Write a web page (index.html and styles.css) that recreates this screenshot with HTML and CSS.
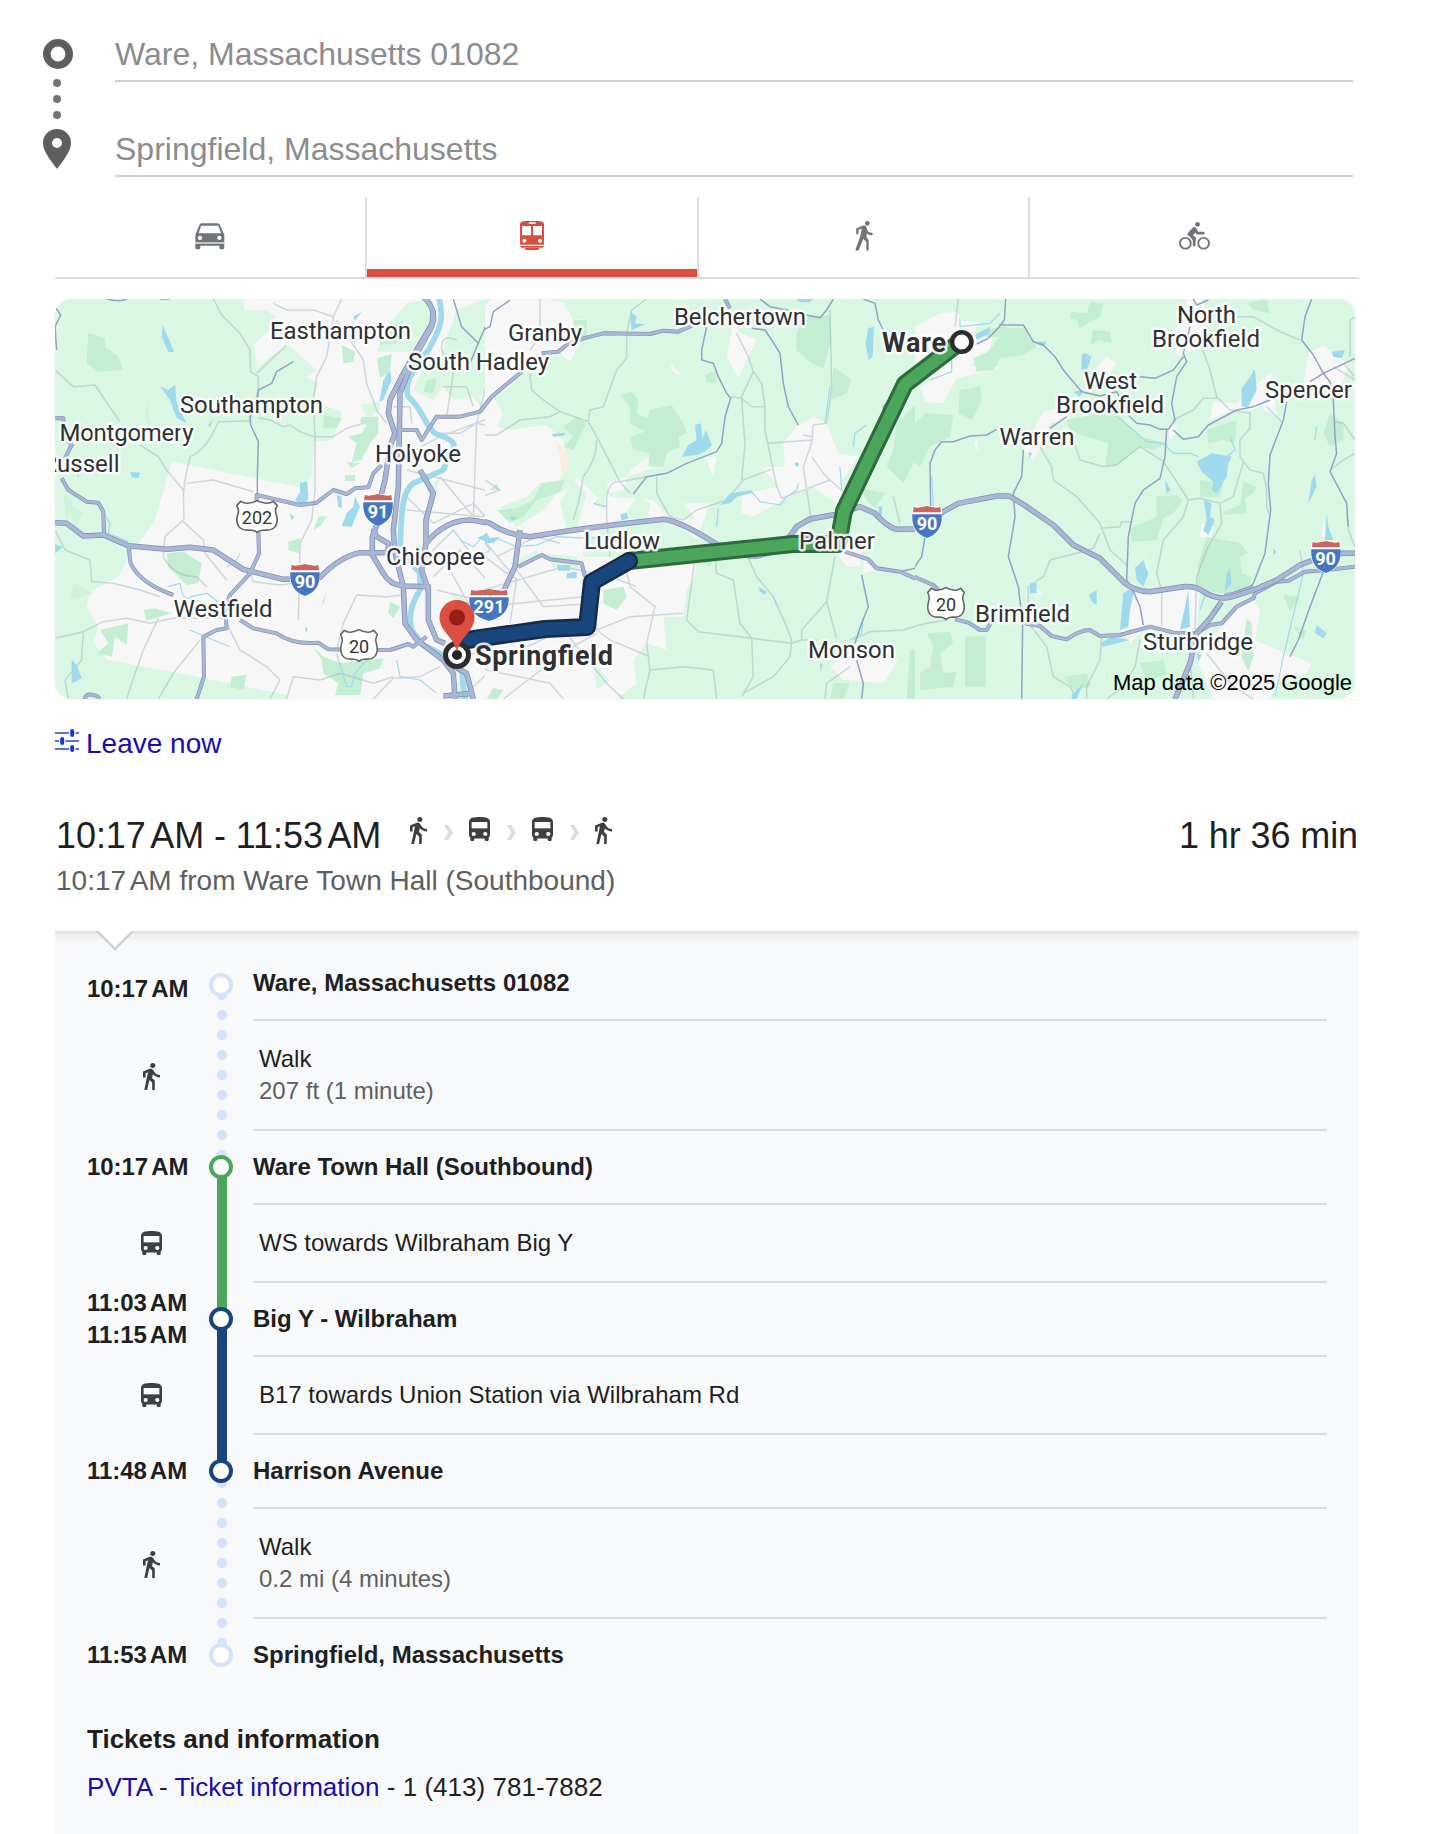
FILE: index.html
```html
<!DOCTYPE html>
<html lang="en">
<head>
<meta charset="utf-8">
<title>Directions</title>
<link rel="stylesheet" href="styles.css">
</head>
<body>
<svg class="defs" aria-hidden="true">
  <symbol id="walk" viewBox="6 1.5 13 21.5" preserveAspectRatio="none"><path d="M13.5 5.5c1.1 0 2-.9 2-2s-.9-2-2-2-2 .9-2 2 .9 2 2 2zM9.8 8.9L7 23h2.1l1.8-8 2.1 2v6h2v-7.500l-2.100-2 .6-3C14.800 12 16.800 13 19 13v-2c-1.900 0-3.500-1-4.300-2.400l-1-1.600c-.4-.6-1-1-1.700-1-.3 0-.5.1-.8.1L6 8.300V13h2V9.600l1.800-.7z"/></symbol>
  <symbol id="bus" viewBox="4 2 16 19" preserveAspectRatio="none"><path d="M4 16c0 .88.39 1.67 1 2.220V20c0 .55.45 1 1 1h1c.55 0 1-.45 1-1v-1h8v1c0 .55.45 1 1 1h1c.55 0 1-.45 1-1v-1.780c.61-.55 1-1.340 1-2.220V6c0-3.500-3.580-4-8-4s-8 .5-8 4v10z"/><path class="lights" d="M6 6h12v5H6z"/><circle class="lights" cx="7.600" cy="15.500" r="1.600"/><circle class="lights" cx="16.400" cy="15.500" r="1.600"/></symbol>
  <symbol id="chev" viewBox="0 0 9 15"><path d="M0 0h4l5 7.500-5 7.500H0l4.500-7.500z"/></symbol>
  <symbol id="interstate" viewBox="0 0 90 96" preserveAspectRatio="none"><path fill="#fff" d="M3 0L-2 28Q-4 80 45 98Q94 80 92 28L87 0z"/><path fill="#c9675f" d="M5 2q10 5 20 2q10-2 20-4q10 2 20 4q10 3 20-2l2 17H3z"/><path fill="#4676c2" d="M1 25h88q4 54-44 71Q-3 79 1 25z"/></symbol>
  <symbol id="usroute" viewBox="0 0 124 100" preserveAspectRatio="none"><path d="M14 4q12 8 24 5q12 0 24-7q12 7 24 7q12 3 24-5l12 13q-8 12-4 24q8 26-2 39q-9 13-30 11q-16 0-24 7q-8-7-24-7q-21 2-30-11q-10-13-2-39q4-12-4-24z"/></symbol>
</svg>

<main class="page">
  <form class="search">
    <div class="markers">
      <svg width="30" height="30" viewBox="0 0 30 30"><circle cx="15" cy="15" r="11.200" fill="none" stroke="#5e5e5e" stroke-width="7.600"/></svg>
      <i></i><i></i><i></i>
      <svg class="pin" width="28" height="40" viewBox="0 0 28 40"><path fill="#5e5e5e" fill-rule="evenodd" d="M14 0a14 14 0 0 1 14 14c0 9-9 19-14 26C9 33 0 23 0 14A14 14 0 0 1 14 0zm0 9a5 5 0 1 0 0 10 5 5 0 0 0 0-10z"/></svg>
    </div>
    <div class="fields">
      <div class="field">Ware, Massachusetts 01082</div>
      <div class="field">Springfield, Massachusetts</div>
    </div>
  </form>

  <nav class="tabs">
    <a class="tab"><svg class="car" width="30" height="27" viewBox="16 32 90 81"><path fill-rule="evenodd" d="M17 68L29 38Q31 33 36 33H84Q89 33 91 38L104 68V89H17zM34 40L27 63H94L86 40zM31 70a6.500 6.500 0 1 0 .1 0zM89 70a6.500 6.500 0 1 0 .1 0z"/><path fill="#c3c5c7" d="M17 89h87v6H17z"/><path d="M17 95h87v12q0 4-4 4h-7q-4 0-4-4v-7H32v7q0 4-4 4h-7q-4 0-4-4z"/></svg></a>
    <a class="tab active"><svg width="24" height="29" viewBox="990 27 72 87"><path fill-rule="evenodd" d="M990 37Q990 27 1010 27H1042Q1062 27 1062 37V98H990zM1017 31v5h20v-5zM996 42v28h27V42zM1029 42v28h27V42zM1003 80a6 6 0 1 0 .1 0zM1050 80a6 6 0 1 0 .1 0z"/><path d="M990 102h72q0 4-6 5h-60q-6-1-6-5zM1004 108h44q0 6-5 6h-34q-5 0-5-6z"/></svg></a>
    <a class="tab"><svg width="18" height="30" viewBox="27 27 54 90"><circle cx="64" cy="34" r="7"/><path fill="none" stroke="currentColor" stroke-width="7" stroke-linecap="round" stroke-linejoin="round" d="M34 64V51L54 44L61 57Q66 66 77 66"/><path d="M46 41L60 41L64 55L61 74L68 85V114Q65 119 61 114V90L52 80L38 114Q33 119 28 114L43 72L48 47z"/></svg></a>
    <a class="tab"><svg width="31" height="28" viewBox="1001 30 92 83"><circle cx="1056" cy="37" r="7"/><g fill="none" stroke="currentColor"><circle cx="1020" cy="93" r="16" stroke-width="5.500"/><circle cx="1074" cy="93" r="16" stroke-width="5.500"/><path stroke-width="8" stroke-linecap="round" stroke-linejoin="round" d="M1046 99V78L1030 67L1046 49L1056 63H1073"/></g><path d="M1027 64l16-18h8l5 10-14 14 9 7v8h-9z"/></svg></a>
  </nav>

  <svg class="map" width="1300" height="400" viewBox="0 0 1300 400">
    <defs>
      <g id="hw-a">
        <path d="M45 698L80 700L130 738L190 735L265 767L380 778L450 772L520 780L610 838L730 868H795L840 862Q900 800 960 788H1040"/>
        <path d="M1150 20Q1185 50 1180 95L1130 180L1085 260L1050 330L1045 370L1065 430L1050 470L1035 570L1015 650L1012 700L997 740V795L1030 850Q1050 885 1090 888L1165 890L1165 990L1190 1050L1215 1060"/>
        <path d="M1180 60L1175 110L1120 210L1080 310L1078 430L1075 590L1060 720L1065 790L1090 890L1095 1000L1130 1050L1210 1110L1240 1150L1245 1227M1210 1110L1280 1150L1300 1227"/>
        <path d="M1145 840L1165 900M1140 540L1180 610L1158 690V760L1145 840M1158 760Q1215 690 1290 690Q1350 695 1440 735"/>
        <path d="M1000 715L1010 740L1045 760V790M1210 1218L1300 1210"/>
      </g>
      <g id="md-a">
        <path d="M650 632V615L780 645L830 638L880 600L920 612L945 595L985 592L1000 550L1025 525"/>
        <path d="M655 720L657 790L630 850L570 915L555 960L560 1015L530 1020L490 1040L492 1160L470 1227"/>
        <path d="M65 565L85 600L140 635L175 638L190 665L192 735M265 767L272 820Q300 880 400 915M600 990L640 1015L710 1030Q760 1065 835 1058L865 1078L960 1080L1050 1080L1105 1062L1120 1070L1160 1040"/>
        <path d="M1435 250L1350 325L1320 365L1260 380L1190 380L1145 450L1130 420H1080M45 385H70L72 440L95 465L75 505M135 1227Q135 1212 155 1214Q175 1216 178 1227"/>
      </g>
      <g id="hw-b">
        <path d="M0 692Q60 680 120 700Q170 735 240 740Q430 710 640 688Q680 690 780 750Q850 800 920 798L990 780L1040 710L1080 687L1160 673L1230 650L1275 670Q1320 720 1350 718L1440 716"/>
        <path d="M210 720L195 830L160 905"/>
      </g>
      <g id="md-b">
        <path d="M0 383L90 365L125 320L215 245M275 190L325 185L350 165L400 145L460 130L600 132L640 122L685 125L730 105M825 27L840 55M205 830L275 795L300 808L395 820L405 860"/>
        <path d="M1185 785L1255 808L1280 835L1350 845L1440 885M0 1130L25 1227M50 1130L68 1227"/>
      </g>
      <g id="hw-c">
        <path d="M0 720Q80 700 130 665L175 640L290 618H328L380 650L460 705L520 765L600 805L670 875Q700 903 750 905L850 890Q890 888 910 905Q950 930 990 922L1060 900L1130 870L1200 825Q1260 800 1330 790H1365"/>
        <path d="M965 935L930 985L890 1030L870 1120L825 1227"/>
      </g>
      <g id="md-c">
        <path d="M0 842L100 885L115 900M165 988L205 998L240 1020H260L275 995M375 1000L420 1008L455 1038L500 1048Q540 1020 570 1020L600 1038L660 1035L750 1010L830 1030L890 1028M890 1028L930 1005L965 1000L1010 950L1060 925L1065 910L1130 875L1165 872L1215 845L1280 840L1365 830"/>
        <path d="M970 925L980 915L1000 912L1060 890"/>
      </g>
    </defs>

    <svg x="0" y="0" width="430" height="400" viewBox="45 27 1290 1200">
      <path class="base" d="M0 0h1440v1260H0z"/>
      <path class="land" d="M45 27H608L615 62L680 60L705 80L690 120L640 165L655 230L690 200L745 165L830 240L800 262L835 280L820 330L850 345L905 365L880 450L822 455L815 560L780 592L395 515L345 690L255 820L235 860L150 905L140 950L175 1010L160 1060L200 1110L420 1150L740 1215V1227H45z"/>
      <path class="land" d="M1100 40L1160 27L1185 100L1110 185H1010L1040 110zM1200 200L1250 60L1330 27H1440V130L1390 180L1420 230L1320 320L1340 380L1300 320L1240 330L1210 290L1180 330L1120 300L1150 230zM960 345L1020 330V360L985 385zM1240 1180L1300 1160L1290 1227H1240zM1160 600L1200 560L1180 650zM1230 910L1280 925L1250 950z"/>
      <path class="wood" d="M145 130L195 145V170L235 200L250 240L175 245L140 220zM905 165L945 185L940 215L910 220zM1010 205L1055 192L1050 250L1020 262zM965 380H1015V430L990 460L965 510L935 515L950 460L925 440L965 430L980 405L960 395zM850 375L905 385L890 415H850zM920 515L960 520L935 535zM915 555H945V573H915zM835 680L860 678L845 705L820 720zM745 755L780 745L775 790L745 780zM380 790L430 785L485 820L475 880L440 885L385 830zM310 960L345 955L395 970L320 992zM180 1020L265 1000L260 1065L225 1040L215 1100L170 1090L205 1060zM820 1070L850 1100L905 1120L1030 1105L1020 1135L970 1150L960 1215H885L895 1180L850 1150L845 1110zM575 1160L620 1155L610 1200L570 1190zM1050 935L1080 950L1060 985L1045 970zM1370 660L1440 670V690L1380 695zM1160 270L1190 265L1180 310L1150 305zM1020 130L1090 90L1070 160L1020 165zM1340 1200L1385 1195V1227H1340z"/>
      <path class="wood soft" d="M70 610L100 640L80 690zM90 640L130 670L100 720zM100 880L160 910L90 930zM325 335L330 420L315 380z"/>
      <path class="minor" d="M520 27L545 75L600 130L630 180L632 245L655 260V300L630 390M45 240L100 290L165 285L205 345L240 395M300 465L355 500L380 540L430 600L432 690M505 285M740 165L650 250M632 392L535 395Q500 480 450 500L435 570L430 610M440 580L520 570L640 605M430 690L375 740L370 800Q400 860 470 860L500 890M430 695L490 750L495 790L560 870M655 383L690 390L730 410L750 405L780 425L820 440H880L920 415L970 400M905 27L880 80L820 60H740L700 40M880 80L860 200L830 260L820 330L825 440L825 600L815 690L780 760L775 990M890 90L930 150L970 210L980 280L1010 360L1040 400M45 720L75 780L150 810L155 875L220 880L300 900L360 920M45 1045L130 1025L190 995L260 985L330 1000L400 985L550 985M130 1025L125 1110L75 1170L85 1227M355 985L310 1080L275 1180L260 1227M480 1050L400 1150L355 1227M560 1000L600 1080L680 1130L720 1170L690 1227M740 1227L760 1160L840 1170L900 1150L1000 1180L1060 1160M630 845L640 875L720 885L760 880M890 1080L910 1000L950 915L1040 920L1090 915M1000 1227L1060 1165L1140 1160L1200 1130M1090 500L1200 440L1440 350M1100 540L1220 570L1370 610L1330 680L1100 660M1100 620L1180 700L1300 640L1380 730M1200 560L1300 680L1310 400L1340 280L1390 60M1160 800L1240 720L1300 800L1420 780M1180 860L1260 780L1340 870L1440 850M1190 900L1440 960M1230 840L1290 950L1340 990M1280 1050L1440 1200M1260 1227L1440 1060M1280 1090L1440 1100M1250 150Q1200 130 1205 180L1240 250L1220 380M1210 290H1280L1300 350M1060 350H1110L1115 400M1180 430L1260 430L1310 400L1440 430"/>
      <path class="river" d="M1195 20C1215 80 1200 120 1165 180C1120 240 1090 280 1105 320C1150 360 1150 400 1185 430C1240 450 1255 460 1230 490L1210 540L1120 580C1080 610 1085 690 1080 780L1140 850V900Q1100 960 1115 1020L1150 1065L1200 1090L1265 1145L1275 1227"/>
      <path class="water" d="M368 105L390 155L402 185L385 187L365 140zM360 288L385 300L405 285L410 340L440 400L410 385L390 330zM520 385L510 412L504 408zM270 545L300 548L295 565L275 562zM780 578L802 575L805 625L790 650L765 630L780 605zM890 615L905 620V655L895 650zM945 620L960 650L935 710L905 708L920 670L940 650zM750 670L762 680L755 692zM1050 240L1055 270L1030 330L1018 335L1030 270zM45 765L70 770L45 790zM95 1110L110 1125L125 1165L95 1180zM1310 745L1350 725L1370 750L1400 745L1370 765zM860 905L850 940L845 945zM795 1010L803 1015L798 1030zM940 80L965 65L945 92z"/>
      <path class="stream" d="M170 635L210 700L205 730L265 755M385 890L420 880L430 920M450 920L500 910L540 940M110 500L115 560M600 790Q590 820 560 830M890 1090L920 1190H935L945 1150L980 1110M1070 1110L1080 1160L1140 1170L1190 1210M1260 750L1300 770L1320 750M450 1020L520 1050L570 1070M430 920L480 935"/>
      <path class="second" d="M760 215L710 245L695 280L655 300L650 345L630 380L632 405L655 455L652 560M652 560V620M45 50L62 75L45 110L50 180M200 27Q240 37 260 27M1240 27L1265 110L1315 160L1340 100L1360 60L1400 27M1315 160L1290 220M360 27H390"/>
      <use href="#hw-a" class="case hw"/><use href="#md-a" class="case md"/><use href="#md-a" class="fill md"/><use href="#hw-a" class="fill hw"/>
    </svg>

    <svg x="430" y="0" width="430" height="400" viewBox="105 27 1290 1200">
      <path class="land" d="M0 0h1440v1260H0z"/>
      <path class="base" d="M0 60L100 60L120 27H270L340 35L370 90L400 85L395 150L360 215L330 190L240 220L180 290L130 320L160 370L140 410L180 420L290 405L340 450L355 520L330 570L270 580L230 620L150 650L200 710L280 660L320 610L350 600L380 560L440 620L520 600L540 540L590 505L620 530L530 560L470 580L480 620L610 630L655 680L740 690L700 640L780 640L740 750L680 700L500 690L400 760V800H740L735 860L710 900L700 980L640 980L650 1080L590 1060L550 1110L560 1180L500 1227H0zM850 100L870 130L920 150L895 200L865 265L830 200L840 150zM660 215L700 265L665 240zM765 500H800L790 560zM1090 380L1130 400L1165 490L1225 500L1170 580L1200 620L1225 640L1150 680L1160 640L1090 590L1000 630L910 680L875 670V610L990 590L930 530H1005L1000 460L1040 410zM1145 760L1240 750L1230 830L1190 830L1160 790zM1240 800L1290 840L1240 850zM1180 1100L1240 1070L1345 1110L1300 1180L1180 1170L1140 1130zM1440 330L1395 335L1440 290z"/>
      <path class="land" d="M30 930L60 910L50 950zM330 640L370 570L410 610L380 720H350zM430 640L470 600L460 660zM520 680L590 690L600 640L560 620zM180 820L260 780L270 800L200 840zM430 1120L480 1170L440 1200zM280 790L380 800L390 840L310 830z"/>
      <path class="wood" d="M510 315L545 305L565 330L560 370L590 385L600 360L665 345L700 400L710 430L685 440L690 470L650 490L640 530L595 530L600 490L550 480L540 440L585 425L540 400V350zM1060 80L1140 75L1145 150L1120 235L1085 220L1040 180V130zM1150 230L1205 270L1190 310L1145 330zM765 255L800 240V280L770 275zM340 410L380 380L410 400L370 480L340 470L370 440zM140 660L200 655L250 630L275 580L345 570L330 605L290 620L260 630L220 680L180 700zM1340 400L1400 340L1440 420L1360 580L1310 530L1330 480zM1230 595L1305 610L1275 655L1250 630zM460 900L520 890L530 920L500 960L460 940zM310 990L390 985V1010H310zM1150 1180L1200 1180L1180 1227H1140zM1380 1080H1440V1227H1370zM130 1195L160 1200L140 1227H110zM730 800H790L780 830zM20 110L80 130L40 160L0 150zM120 600L140 580L150 600zM370 90H410V145H370zM1385 500L1440 450V500L1400 530z"/>
      <path fill="#f8efe3" d="M315 450L355 490V530L335 570L330 500z"/>
      <path class="minor" d="M530 205L500 240L460 350L420 360L415 395M530 205V130L545 60L590 27M240 250L245 300L280 330L330 365L415 395L440 440L510 575L540 610M440 450Q440 510 400 560L385 640L370 690M100 435H140L210 390L300 380L330 365M270 27V140L240 180M100 435V300L30 27M100 435V500L70 600L50 700M620 560V610L660 680L700 690L740 660L830 630L880 570L970 535M875 320L880 400L885 460L875 570M945 350V420L980 590L995 625L1140 570M875 320L910 245L935 280L945 350L905 350L875 325L845 320M860 130L895 200L910 245M1140 60L1145 300L1130 400L1090 405L1085 460L1060 530L1070 600L1085 700M1085 440L1060 435M955 460L1085 450M1085 500L1120 550L1140 570L1180 605M470 690L470 620Q480 570 510 575L590 560M470 690L480 800M735 800L710 990M795 800L800 850L850 870L870 1000L905 1045L910 1160L875 1220M710 990L745 1025L905 1045L1025 1060L1055 1050M895 805L920 860L970 920L1010 1010L1025 1050L1020 1100L970 1160L880 1210M1155 800L1130 935L1055 1020V1050L1100 1050M1130 935L1160 1045M1440 995L1360 1020L1260 1025L1210 1050M1200 1130L1130 1180L1125 1227M440 1020L540 980L700 970M520 800L540 890L615 950L590 1060L600 1140L580 1227M600 1140L700 1130L790 1140L800 1227M440 1020L480 1050L600 1100M200 840L280 950L440 940L440 1020M60 700L200 870L180 1000M100 900L340 830L480 860L560 890M0 960L400 920M100 1130L340 1020L470 1180L520 1227M60 1130L300 1180L340 1227M160 1227L350 1080L440 1030M60 540L150 600L40 640M0 720L170 850L200 840M140 800L260 740L330 760M0 560L60 700L120 780L10 860M1330 620L1350 700"/>
      <path class="water" d="M735 405L752 400L758 445L768 420L785 465L765 485L740 495L695 500L715 465L740 450zM1255 115L1272 110L1268 200L1255 210L1247 160zM540 65L560 80L555 100L585 103L545 120zM820 635L840 610L905 600V610L860 620L840 640L810 645zM510 675L530 668L535 685L515 692zM1285 650L1297 648L1295 685L1285 670zM925 890L950 905L945 915L930 905zM350 850L380 845V865H350zM1110 1120L1118 1125L1112 1145zM1040 27H1090L1080 37H1050zM305 432L345 428V436L310 440zM1035 515L1047 520L1045 530L1035 528zM85 740L110 728L120 745L150 740L130 760L95 758zM175 680H200L190 692zM320 825H360V842H325z"/>
      <path class="stream" d="M1170 530L1175 600M1140 290L1125 400M1250 405L1215 430L1210 470M900 600L930 635L990 645L1010 620L1040 600L1045 580M805 655L800 710M140 745L200 770L260 765L320 740L420 745L500 735M430 640L470 650M740 800L745 820M970 920L980 950M1240 980L1235 1030L1200 1050M0 1140L30 1200"/>
      <path class="second" d="M770 110L755 180V210L790 220L805 260L830 310L842 325L825 380L815 460L800 485L710 520L650 550L590 560L550 612M905 115L945 120L965 150L990 190L1000 280L1015 350L1045 405M930 27L960 50L1010 60L1040 70L1110 83L1130 60L1150 27M1240 27L1275 40L1285 90L1300 120M1300 380L1300 350L1340 300M1235 855L1255 950L1235 1000L1215 1060M1220 1110L1240 1180L1235 1227M1425 740L1415 800L1395 835L1350 845M1440 520V650M0 27L20 50L30 120L85 160L100 120L120 110L130 65L180 30M85 160L60 220"/>
      <path class="river" d="M15 1130L45 1227"/>
      <use href="#hw-b" class="case hw"/><use href="#md-b" class="case md"/><use href="#md-b" class="fill md"/><use href="#hw-b" class="fill hw"/>
    </svg>

    <svg x="860" y="0" width="440" height="400" viewBox="45 27 1320 1200">
      <path class="land" d="M0 0h1440v1260H0z"/>
      <path class="base" d="M45 110L120 70L170 65L190 95L240 95L220 130L280 130L270 180L230 200L215 230L310 230L240 250L170 265L130 340L75 335L60 290L110 265L45 265zM430 365L480 355L510 385L450 400L430 450L420 480L400 510L370 480L410 400zM620 200L650 220L620 260L590 230zM230 445L238 490L222 460zM820 125L850 80L860 27H905L920 60L905 170L830 200zM940 335L1010 340L1050 300L1115 245V310L1060 360L990 365L930 390zM1210 290L1225 190L1270 165L1345 225L1325 280L1290 275L1230 310zM1085 340L1120 320L1130 375L1090 360zM805 400L830 410L830 430L810 450zM680 915L900 895L890 1020L820 1035L740 1010L690 1060L660 1020zM905 1090L965 1010L1000 960L1060 925L1080 960L1065 1050L1110 1070L1235 1120L1220 1150L1140 1170L1110 1227H940L890 1110zM905 700L945 710L930 745L900 740zM1270 690L1285 760L1265 740zM735 790L745 850L735 870zM405 890L430 915L410 912z"/>
      <path class="wood" d="M225 130L300 110L370 115L410 170L370 195L300 205L280 240L230 245L220 205L260 190L300 140L240 140zM180 300L240 290L245 330L215 390L175 370zM515 65L560 70L570 35L610 40L600 80L570 95L540 115L530 90L510 85zM580 120L630 125L635 160L600 150L570 165zM75 370L160 375L150 440L90 470L60 530L45 520V400zM500 390L600 370L660 380L720 440L800 460L760 480L720 470L650 525L615 530L625 460L560 440L510 420zM920 420L1010 390L1005 460L970 450L925 460zM770 620L830 615L850 630L820 670L790 685L770 750L695 755L690 715L770 680zM900 570L970 580L960 620L900 620zM1030 575L1070 590L1060 610L1035 625L1040 670L970 675V665L1020 645zM920 740L1020 760L1045 790L1020 800L1025 850L1055 860L1050 890L1000 915L930 905L890 890L895 820zM1290 370L1330 400V450L1290 470L1270 430zM195 1040L257 1038V1190H195zM80 1030L150 1025L160 1060L120 1090L130 1150L170 1145L160 1190L60 1200V1150L90 1130L100 1070zM1040 985L1055 1000L1060 1100L1045 1145L1025 1100zM490 1160L560 1150L575 1190L520 1200zM720 1120L790 1110L800 1155L740 1170zM1040 40L1100 27L1110 70L1060 60zM1150 915L1200 920L1170 965zM1180 1010L1220 1020L1210 1050z"/>
      <path class="minor" d="M175 27L165 110M1000 80H1060L1140 125L1200 150M905 170L930 240L950 320L990 360L1050 370V415L1020 450V500L1050 540L1090 550L1100 600V650L1110 680M1030 515L1000 620L960 640L900 625L865 630L840 590L790 515L760 495L720 470L650 525L610 530L540 510L525 465M820 390L880 360L910 325L950 325M865 630L850 680L790 750L770 850L785 900V1010M960 640L965 700L920 780L890 860L885 1020M420 470L455 530L460 570L530 620L600 700L630 780L680 825M600 730L580 775L530 790L450 810L430 860L385 890V960M600 715L660 710L665 695H695M0 1020L80 1000L140 990M390 1005L440 1070L460 1160L510 1190L530 1227M605 1040L600 1110L560 1190V1227M720 1050L705 1130L670 1190L620 1227M870 1130L880 1190V1227M920 1090L1000 1190L1060 1227M1300 395L1330 400L1365 450M1365 490L1330 510L1290 540M1340 670L1345 720L1365 770M1365 80L1350 90V200M1330 220L1365 260M1300 230L1365 270"/>
      <path class="water" d="M545 195L555 188L575 200L560 240H545zM1050 260L1065 240L1070 300L1045 350H1025V295zM1295 185L1335 180L1325 205L1300 200zM890 515L935 490L995 500L985 520L980 560L950 610L935 600L940 575L905 545zM912 630L935 640L930 680L945 690L925 735L910 720L920 690zM705 835L730 810L745 850L730 890L710 870zM670 910L705 890L690 960L685 1010L660 1020zM865 900L870 1010L840 1020L855 950zM990 835L995 880L975 905L980 850zM567 915L590 900V945L575 935zM390 880H410V910H390zM600 1060L635 1040L690 1050L610 1070zM1250 1005L1280 1030L1270 1045L1245 1030zM1280 670L1285 710L1300 750H1275zM385 485L397 490L388 505zM400 155L440 155L430 170L410 162zM225 135L270 110V130L230 150zM795 570L812 600L800 610zM1245 555L1250 590L1225 640L1235 570zM1120 775L1130 785L1120 795zM890 1090L905 1095L895 1115zM515 1215L550 1180L530 1227H515zM520 305L550 300L540 320z"/>
      <path class="stream" d="M180 85V110L270 100L300 70M155 200V245L90 270M640 370L700 420L740 455L790 460L820 490L870 490L895 500M990 440L1005 480L980 500M95 560L100 650M1200 780L1210 850L1150 1100L1125 1220M1060 240L1060 260M1100 350L1145 395M920 900L900 960M1250 410L1245 450"/>
      <path class="second" d="M317 27L313 90L298 110L265 145L230 162M298 105L370 105L400 155L430 165L465 200L490 240L545 305L600 318L650 305L690 380L710 400L750 405L780 418H805L825 390L815 340L830 260L860 215L850 190L870 110M720 260L765 265L820 240L850 200M800 418L795 500L780 565L730 600L705 640L685 740L680 870L700 905L720 950L730 1005M820 420L850 448L895 440L925 405L1010 360L1060 350L1110 330M1160 335L1150 390L1110 495L1105 580L1112 660L1095 790L1060 880L1040 905M1235 27L1215 80L1205 150L1240 195L1270 250L1365 205M1230 275L1270 250L1290 275L1300 330L1305 440L1310 490L1290 545L1340 640L1345 710M880 27L890 45L925 30M290 418L260 435L210 438L160 455H125L105 480L90 520L92 650M500 380L450 415M370 480L365 560L340 610L345 680L325 800L355 890L368 1000L365 1227M75 740L65 800L45 830L0 845M1270 845L1230 950L1195 1050L1170 1100"/>
      <use href="#md-c" class="case md"/><use href="#md-c" class="fill md"/><use href="#hw-c" class="case hw"/><use href="#hw-c" class="fill hw"/>
    </svg>

    <g class="route">
      <path class="edge-green" d="M905 43L850 85L789 212L783 245H738L574 262"/>
      <path class="core-green" d="M905 43L850 85L789 212L783 245H738L574 262"/>
      <path class="edge-blue" d="M574 262L537 283L532 328L490 330L412 341"/>
      <path class="core-blue" d="M574 262L537 283L532 328L490 330L412 341"/>
    </g>
    <g class="shields">
      <use href="#interstate" x="308" y="195" width="30" height="32"/><use href="#interstate" x="235" y="265" width="30" height="32"/><use href="#interstate" x="414" y="290" width="40" height="32"/><use href="#interstate" x="857" y="207" width="30" height="32"/><use href="#interstate" x="1256" y="242" width="30" height="32"/>
      <use class="us" href="#usroute" x="181" y="201" width="42" height="33"/><use class="us" href="#usroute" x="285" y="330" width="38" height="33"/><use class="us" href="#usroute" x="872" y="288" width="38" height="33"/>
      <g class="num"><text x="323" y="219">91</text><text x="250" y="289">90</text><text x="434" y="314">291</text><text x="872" y="231">90</text><text x="1270.500" y="266">90</text></g>
      <g class="num dark"><text x="202" y="225">202</text><text x="304" y="354">20</text><text x="891" y="312">20</text></g>
    </g>
    <g class="town">
      <text x="215" y="39.700" textLength="141">Easthampton</text><text x="125" y="113.700" textLength="143">Southampton</text><text x="4.500" y="141.700" textLength="134">Montgomery</text><text x="64.500" y="173.300" text-anchor="end">Russell</text><text x="320" y="162.700" textLength="86">Holyoke</text><text x="331" y="265.700" textLength="99">Chicopee</text><text x="118.500" y="317.700" textLength="99">Westfield</text><text x="353" y="71" textLength="141">South Hadley</text><text x="453" y="41.700" textLength="74">Granby</text><text x="619" y="25.700" textLength="132">Belchertown</text><text x="529" y="249.700" textLength="76">Ludlow</text><text x="744" y="249.700" textLength="76">Palmer</text><text x="753" y="358.700" textLength="87">Monson</text><text x="1122" y="23.700" textLength="59">North</text><text x="1097" y="47.700" textLength="108">Brookfield</text><text x="1029" y="89.700" textLength="53">West</text><text x="1001" y="113.700" textLength="108">Brookfield</text><text x="1210" y="98.700" textLength="87">Spencer</text><text x="944.500" y="145.700" textLength="75">Warren</text><text x="920" y="322.700" textLength="95">Brimfield</text><text x="1088" y="350.700" textLength="110">Sturbridge</text>
      <g class="city"><text x="827" y="52.700" textLength="64">Ware</text><text x="420" y="365.700" textLength="138">Springfield</text></g>
    </g>
    <circle cx="906.700" cy="43" r="9.700" fill="#fff" stroke="#2d2d2d" stroke-width="4.600"/>
    <circle cx="402" cy="356" r="11.500" fill="#fff" stroke="#2d2d2d" stroke-width="5"/><circle cx="402" cy="356" r="5" fill="#222"/>
    <path fill="#da4f41" d="M402 301a17.500 17.500 0 0 1 17.500 17.500C419.500 332 405 338 402 353C399 338 384.500 332 384.500 318.500A17.500 17.500 0 0 1 402 301z"/><circle cx="402" cy="318.500" r="8" fill="#961f18"/>
    <text class="credit" x="1058" y="391" textLength="239">Map data ©2025 Google</text>
  </svg>

  <a class="leave"><svg width="25" height="25" viewBox="0 0 25 25"><path fill="none" stroke="#5873e4" stroke-width="2" d="M0 5H14M20.500 5H24M0 13H4M10.500 13H24M0 21H14M20.500 21H24"/><path fill="none" stroke="#1438d4" stroke-width="4" stroke-linecap="round" d="M17.200 3V7M7.200 11V15M17.200 19V22"/></svg><span>Leave now</span></a>

  <header class="trip">
    <div>
      <div class="summary"><h1>10:17<b class="nn"> </b>AM - 11:53<b class="nn"> </b>AM</h1>
        <div class="modes"><svg class="w"><use href="#walk"/></svg><svg class="c"><use href="#chev"/></svg><svg class="b"><use href="#bus"/></svg><svg class="c"><use href="#chev"/></svg><svg class="b"><use href="#bus"/></svg><svg class="c"><use href="#chev"/></svg><svg class="w"><use href="#walk"/></svg></div></div>
      <p>10:17<b class="nn"> </b>AM from Ware Town Hall (Southbound)</p>
    </div>
    <div class="duration">1 hr 36 min</div>
  </header>

  <section class="panel">
    <svg class="caret" width="42" height="21" viewBox="0 0 42 21"><path d="M1-2L21 18L41-2" fill="#fff" stroke="#d0d1d3" stroke-width="2.500"/></svg>
    <div class="row stop first"><time>10:17<b class="nn"> </b>AM</time><div class="rail"><span class="node pale"></span></div><h2>Ware, Massachusetts 01082</h2></div>
    <div class="row leg tall"><svg class="w"><use href="#walk"/></svg><div class="rail"><span class="line dots"></span></div><div class="info">Walk<small>207 ft (1 minute)</small></div></div>
    <div class="row stop"><time>10:17<b class="nn"> </b>AM</time><div class="rail"><span class="node green"></span></div><h2>Ware Town Hall (Southbound)</h2></div>
    <div class="row leg"><svg class="b"><use href="#bus"/></svg><div class="rail"><span class="line solid-green"></span></div><div class="info">WS towards Wilbraham Big Y</div></div>
    <div class="row stop"><time>11:03<b class="nn"> </b>AM<br>11:15<b class="nn"> </b>AM</time><div class="rail"><span class="node navy"></span></div><h2>Big Y - Wilbraham</h2></div>
    <div class="row leg"><svg class="b"><use href="#bus"/></svg><div class="rail"><span class="line solid-navy"></span></div><div class="info">B17 towards Union Station via Wilbraham Rd</div></div>
    <div class="row stop"><time>11:48<b class="nn"> </b>AM</time><div class="rail"><span class="node navy"></span></div><h2>Harrison Avenue</h2></div>
    <div class="row leg tall"><svg class="w"><use href="#walk"/></svg><div class="rail"><span class="line dots"></span></div><div class="info">Walk<small>0.2 mi (4 minutes)</small></div></div>
    <div class="row stop last"><time>11:53<b class="nn"> </b>AM</time><div class="rail"><span class="node pale"></span></div><h2>Springfield, Massachusetts</h2></div>
    <div class="tickets"><h3>Tickets and information</h3><p><a>PVTA</a> - <a>Ticket information</a> - 1 (413) 781-7882</p></div>
  </section>
</main>
</body>
</html>
```
FILE: styles.css
```css
* { box-sizing: border-box; }
body { margin: 0; background: #fff; color: #1f1f1f; font-family: "Liberation Sans", Arial, sans-serif; overflow: hidden; }
h1, h2, h3, p { margin: 0; font-weight: 400; }
svg { display: block; flex: none; }
.defs { width: 0; height: 0; position: absolute; }
.page { width: 1446px; height: 1834px; padding-left: 55px; overflow: hidden; }
.nn { font-weight: inherit; word-spacing: -.15em; }

.search { display: flex; height: 197px; margin-left: -12px; }
.markers { width: 30px; padding-top: 39px; display: flex; flex-direction: column; align-items: center; }
.markers i { width: 8px; height: 8px; border-radius: 50%; background: #70757a; margin: 10px 2px 0 0; }
.markers i + i { margin-top: 8px; }
.markers .pin { margin: 10px 2px 0 0; }
.fields { margin-left: 42px; width: 1238px; }
.field { height: 95px; padding-top: 49px; line-height: 36px; border-bottom: 2px solid #d0d0d0; font-size: 32px; color: #8b8c8d; }
.field:first-child { height: 82px; padding-top: 36px; }

.tabs { display: grid; grid-template-columns: 312px 332px 331px 329px; width: 1304px; height: 82px; border-bottom: 2px solid #dadce0; }
.tab { border-right: 2px solid #dadce0; display: flex; justify-content: center; align-items: flex-start; padding-top: 24px; color: #70757a; }
.tab:last-child { border-right: 0; padding-top: 25px; }
.tab svg { fill: currentColor; }
.car { margin-top: 2px; }
.tab.active { color: #d94f40; box-shadow: inset 0 -8px #d94f40; }

.map { margin-top: 20px; border-radius: 16px; overflow: hidden; }
.base { fill: #f7f7f7; }
.land { fill: #d9f7e3; }
.wood { fill: #c4eed1; }
.soft { opacity: .5; }
.water { fill: #9fd9ec; }
.minor, .river, .stream, .second, .case, .fill { fill: none; stroke-linejoin: round; }
.minor { stroke: #9aa9b8; stroke-opacity: .42; stroke-width: 4.500; }
.river { stroke: #9fd9ec; stroke-width: 17; }
.stream { stroke: #9fd9ec; stroke-width: 3.500; }
.second { stroke: #93a1c3; stroke-width: 4.500; }
.case { stroke: #7f8db7; }
.fill { stroke: #a9b6d4; }
.case.hw { stroke-width: 16.500; }
.fill.hw { stroke-width: 12; }
.case.md { stroke-width: 12; }
.fill.md { stroke-width: 8.500; }
.route path { fill: none; stroke-linejoin: round; stroke-linecap: round; }
.route .edge-green { stroke: #2d6a3d; stroke-width: 18; }
.route .core-green { stroke: #4ba55a; stroke-width: 12; }
.route .edge-blue { stroke: #142c48; stroke-width: 18; }
.route .core-blue { stroke: #18457b; stroke-width: 13; }
.us { fill: #fff; stroke: #666; stroke-width: 5; }
.num { font: 700 18px Roboto, sans-serif; fill: #fff; text-anchor: middle; }
.num.dark { font-weight: 400; fill: #333; }
.town { font: 24px Roboto, sans-serif; fill: #2f3033; stroke: #fff; stroke-opacity: .85; stroke-width: 5px; stroke-linejoin: round; paint-order: stroke; }
.city { font-weight: 700; font-size: 27px; }
.credit { font-size: 22px; fill: #000; }

.leave { display: flex; width: 1304px; height: 110px; padding-top: 27px; color: #1a0dab; font-size: 28px; line-height: 32px; border-top: 2px solid #fafafa; }
.leave span { margin-left: 6px; }

.trip { display: flex; justify-content: space-between; width: 1304px; height: 122px; padding: 6px 1px 0; font-size: 36px; line-height: 42px; }
.summary { display: flex; }
.trip h1 { font-size: 36px; letter-spacing: -.08px; width: 354px; white-space: nowrap; }
.trip p { font-size: 28px; line-height: 32px; color: #5e5e5e; margin-top: 8px; }
.duration { letter-spacing: -.1px; }
.modes { display: flex; padding-top: 2px; }
.w { width: 17px; height: 27px; fill: #3c4043; }
.b { width: 21px; height: 24px; fill: #3c4043; }
.c { width: 9px; height: 15px; fill: #dadce0; margin: 8px 16px 0 17px; }
.lights { fill: #fff; }

.panel { width: 1304px; height: 903px; padding: 16px 32px 0; position: relative; background: linear-gradient(#dedfe1, #eeeff1 4px, #f8f9fb 11px) #f8f9fb; }
.panel .lights { fill: #f8f9fb; }
.caret { position: absolute; left: 39px; top: 0; }
.row { display: grid; grid-template-columns: 103px 62px 1fr; font-size: 24px; line-height: 32px; }
.stop { height: 74px; font-weight: 700; align-items: start; }
.stop h2 { margin-left: 1px; height: 74px; font-size: 24px; line-height: 32px; font-weight: 700; padding-top: 20px; border-bottom: 2px solid #dadce0; white-space: nowrap; }
.stop time { height: 74px; padding-top: 20px; white-space: nowrap; letter-spacing: -.05px; }
.stop time:has(br) { padding-top: 4px; }
.first time { padding-top: 26px; }
.last h2 { border: 0; }
.rail { position: relative; height: 100%; margin-left: 19px; }
.node { position: absolute; z-index: 1; left: 0; top: 24px; width: 24px; height: 24px; border-radius: 50%; background: #fff; border: 4px solid; }
.first .node { top: 26px; }
.pale { border-color: #d5e3fa; }
.green { border-color: #4ba55a; }
.navy { border-color: #18457b; }
.line { position: absolute; left: 8px; width: 10px; top: -36px; bottom: -32px; }
.solid-green { background: #4ba55a; }
.solid-navy { background: #18457b; }
.dots { background: radial-gradient(circle, #d5e3fa 4.700px, transparent 5.300px) 0 0 / 10px 20px; }
.leg { height: 78px; }
.leg.tall { height: 110px; }
.leg > svg { margin: 26px 0 0 54px; }
.leg.tall > svg { margin: 42px 0 0 56px; }
.info { margin-left: 1px; padding: 22px 0 0 6px; border-bottom: 2px solid #dadce0; white-space: nowrap; }
.info small { display: block; font-size: 24px; color: #5e5e5e; }
.tickets { font-size: 26px; line-height: 32px; padding: 30px 0 0; }
.tickets h3 { font-size: 26px; font-weight: 700; }
.tickets p { margin-top: 16px; letter-spacing: .04px; }
.tickets a { color: #1a0dab; }
```
